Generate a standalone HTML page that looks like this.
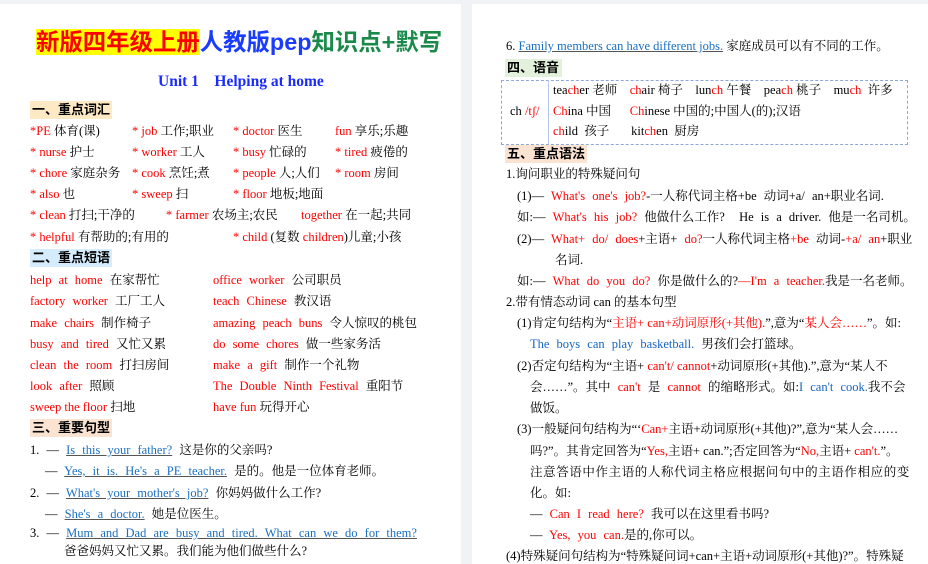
<!DOCTYPE html>
<html><head><meta charset="utf-8"><style>
body{margin:0;width:928px;height:557px;background:#f1f2f5;overflow:hidden;position:relative;font-family:"Liberation Serif","Noto Serif CJK SC",serif;font-size:12.5px;color:#000}
.pg{position:absolute;top:4px;background:#fff;height:560px}
.t{position:absolute;white-space:nowrap;line-height:16px}
.r{color:#f00}.b{color:#1565c0}.u{color:#1a6fc2;text-decoration:underline;text-decoration-color:#555}
.h{position:absolute;font-weight:bold;font-family:"Liberation Sans","Noto Sans CJK SC",sans-serif;font-size:13px;line-height:18px;padding-left:2px}
.ws{word-spacing:4px}
</style></head><body>
<div class="pg" style="left:0;width:461px"></div>
<div class="pg" style="left:472px;width:456px"></div>

<div class="t" style="left:36px;top:29px;font-family:'Liberation Sans','Noto Sans CJK SC',sans-serif;font-weight:bold;font-size:23.4px;line-height:27px"><span style="background:#ff0;color:#f00">新版四年级上册</span><span style="color:#1a3cff">人教版pep</span><span style="color:#1a8a4a">知识点+默写</span></div>
<div class="t" style="left:158px;top:73px;font-weight:bold;font-size:15.5px;color:#1a2bff;line-height:18px">Unit 1&nbsp;&nbsp;&nbsp;&nbsp;Helping at home</div>

<div class="h" style="left:30px;top:101px;width:80px;background:#fde9c4">一、重点词汇</div>
<div class="t r" style="left:30px;top:123px">*PE <span style="color:#000">体育(课)</span></div>
<div class="t r" style="left:132px;top:123px">* job <span style="color:#000">工作;职业</span></div>
<div class="t r" style="left:233px;top:123px">* doctor <span style="color:#000">医生</span></div>
<div class="t r" style="left:335px;top:123px">fun <span style="color:#000">享乐;乐趣</span></div>
<div class="t r" style="left:30px;top:144px">* nurse <span style="color:#000">护士</span></div>
<div class="t r" style="left:132px;top:144px">* worker <span style="color:#000">工人</span></div>
<div class="t r" style="left:233px;top:144px">* busy <span style="color:#000">忙碌的</span></div>
<div class="t r" style="left:335px;top:144px">* tired <span style="color:#000">疲倦的</span></div>
<div class="t r" style="left:30px;top:165px">* chore <span style="color:#000">家庭杂务</span></div>
<div class="t r" style="left:132px;top:165px">* cook <span style="color:#000">烹饪;煮</span></div>
<div class="t r" style="left:233px;top:165px">* people <span style="color:#000">人;人们</span></div>
<div class="t r" style="left:335px;top:165px">* room <span style="color:#000">房间</span></div>
<div class="t r" style="left:30px;top:186px">* also <span style="color:#000">也</span></div>
<div class="t r" style="left:132px;top:186px">* sweep <span style="color:#000">扫</span></div>
<div class="t r" style="left:233px;top:186px">* floor <span style="color:#000">地板;地面</span></div>
<div class="t r" style="left:30px;top:207px">* clean <span style="color:#000">打扫;干净的</span></div>
<div class="t r" style="left:166px;top:207px">* farmer <span style="color:#000">农场主;农民</span></div>
<div class="t r" style="left:301px;top:207px">together <span style="color:#000">在一起;共同</span></div>
<div class="t r" style="left:30px;top:229px">* helpful <span style="color:#000">有帮助的;有用的</span></div>
<div class="t r" style="left:233px;top:229px">* child <span style="color:#000">(复数 </span>children<span style="color:#000">)儿童;小孩</span></div>

<div class="h" style="left:30px;top:249px;width:80px;background:#d4ecfb">二、重点短语</div>
<div class="t r ws" style="left:30px;top:272px">help at home <span style="color:#000">在家帮忙</span></div>
<div class="t r ws" style="left:213px;top:272px">office worker <span style="color:#000">公司职员</span></div>
<div class="t r ws" style="left:30px;top:293px">factory worker <span style="color:#000">工厂工人</span></div>
<div class="t r ws" style="left:213px;top:293px">teach Chinese <span style="color:#000">教汉语</span></div>
<div class="t r ws" style="left:30px;top:315px">make chairs <span style="color:#000">制作椅子</span></div>
<div class="t r ws" style="left:213px;top:315px">amazing peach buns <span style="color:#000">令人惊叹的桃包</span></div>
<div class="t r ws" style="left:30px;top:336px">busy and tired <span style="color:#000">又忙又累</span></div>
<div class="t r ws" style="left:213px;top:336px">do some chores <span style="color:#000">做一些家务活</span></div>
<div class="t r ws" style="left:30px;top:357px">clean the room <span style="color:#000">打扫房间</span></div>
<div class="t r ws" style="left:213px;top:357px">make a gift <span style="color:#000">制作一个礼物</span></div>
<div class="t r ws" style="left:30px;top:378px">look after <span style="color:#000">照顾</span></div>
<div class="t r ws" style="left:213px;top:378px">The Double Ninth Festival <span style="color:#000">重阳节</span></div>
<div class="t r" style="left:30px;top:399px">sweep the floor <span style="color:#000">扫地</span></div>
<div class="t r" style="left:213px;top:399px">have fun <span style="color:#000">玩得开心</span></div>

<div class="h" style="left:30px;top:419px;width:80px;background:#fbe3d2">三、重要句型</div>
<div class="t ws" style="left:30px;top:442px">1. — <span class="u">Is this your father?</span> 这是你的父亲吗?</div>
<div class="t ws" style="left:45px;top:463px">— <span class="u">Yes, it is. He's a PE teacher.</span> 是的。他是一位体育老师。</div>
<div class="t ws" style="left:30px;top:485px">2. — <span class="u">What's your mother's job?</span> 你妈妈做什么工作?</div>
<div class="t ws" style="left:45px;top:506px">— <span class="u">She's a doctor.</span> 她是位医生。</div>
<div class="t ws" style="left:30px;top:525px">3. — <span class="u">Mum and Dad are busy and tired. What can we do for them?</span></div>
<div class="t" style="left:64px;top:543px">爸爸妈妈又忙又累。我们能为他们做些什么?</div>

<!-- right page -->
<div class="t" style="left:506px;top:38px">6. <span class="u">Family members can have different jobs.</span> 家庭成员可以有不同的工作。</div>
<div class="h" style="left:505px;top:59px;width:55px;background:#e3f1dc">四、语音</div>
<div style="position:absolute;left:501px;top:80px;width:405px;height:63px;border:1px dashed #8fa6dd"></div>
<div style="position:absolute;left:548px;top:80px;width:0;height:64px;border-left:1px solid #b8c6ea"></div>
<div class="t" style="left:510px;top:103px">ch <span class="r">/tʃ/</span></div>
<div class="t" style="left:553px;top:82px">tea<span class="r">ch</span>er 老师&nbsp;&nbsp;&nbsp;&nbsp;<span class="r">ch</span>air 椅子&nbsp;&nbsp;&nbsp;&nbsp;lun<span class="r">ch</span> 午餐&nbsp;&nbsp;&nbsp;&nbsp;pea<span class="r">ch</span> 桃子&nbsp;&nbsp;&nbsp;&nbsp;mu<span class="r">ch</span>&nbsp;&nbsp;许多</div>
<div class="t" style="left:553px;top:103px"><span class="r">Ch</span>ina 中国&nbsp;&nbsp;&nbsp;&nbsp;&nbsp;&nbsp;<span class="r">Ch</span>inese 中国的;中国人(的);汉语</div>
<div class="t" style="left:553px;top:123px"><span class="r">ch</span>ild&nbsp;&nbsp;孩子&nbsp;&nbsp;&nbsp;&nbsp;&nbsp;&nbsp;&nbsp;kit<span class="r">ch</span>en&nbsp;&nbsp;厨房</div>
<div class="h" style="left:505px;top:145px;width:80px;background:#fbe3d2">五、重点语法</div>
<div class="t" style="left:506px;top:166px">1.询问职业的特殊疑问句</div>
<div class="t ws" style="left:517px;top:188px">(1)— <span class="r">What's one's job?</span>-一人称代词主格+be 动词+a/ an+职业名词.</div>
<div class="t ws" style="left:517px;top:209px">如:— <span class="r">What's his job?</span> 他做什么工作?&nbsp; He is a driver. 他是一名司机。</div>
<div class="t ws" style="left:517px;top:231px">(2)— <span class="r">What+ do/ does</span>+主语+ <span class="r">do?</span>一人称代词主格<span class="r">+be</span> 动词-<span class="r">+a/ an</span>+职业</div>
<div class="t" style="left:555px;top:252px">名词.</div>
<div class="t ws" style="left:517px;top:273px">如:— <span class="r">What do you do?</span> 你是做什么的?<span class="r">—I'm a teacher.</span>我是一名老师。</div>
<div class="t" style="left:506px;top:294px">2.带有情态动词 can 的基本句型</div>
<div class="t" style="left:517px;top:315px">(1)肯定句结构为“<span class="r">主语+ can+动词原形(+其他).</span>”,意为“<span class="r">某人会……</span>”。如:</div>
<div class="t ws b" style="left:530px;top:336px">The boys can play basketball. <span style="color:#000">男孩们会打篮球。</span></div>
<div class="t" style="left:517px;top:358px">(2)否定句结构为“主语+ <span class="r">can't/ cannot</span>+动词原形(+其他).”,意为“某人不</div>
<div class="t ws" style="left:530px;top:379px">会……”。其中 <span class="r">can't</span> 是 <span class="r">cannot</span> 的缩略形式。如:<span class="b">I can't cook.</span>我不会</div>
<div class="t" style="left:530px;top:400px">做饭。</div>
<div class="t" style="left:517px;top:421px">(3)一般疑问句结构为“‘<span class="r">Can+</span>主语+动词原形(+其他)?”,意为“某人会……</div>
<div class="t" style="left:530px;top:443px">吗?”。其肯定回答为“<span class="r">Yes,</span>主语+ can.”;否定回答为“<span class="r">No,</span>主语+ <span class="r">can't.</span>”。</div>
<div class="t" style="left:530px;top:464px;letter-spacing:0.6px">注意答语中作主语的人称代词主格应根据问句中的主语作相应的变</div>
<div class="t" style="left:530px;top:485px">化。如:</div>
<div class="t ws" style="left:530px;top:506px">— <span class="r">Can I read here?</span> 我可以在这里看书吗?</div>
<div class="t ws" style="left:530px;top:527px">— <span class="r">Yes, you can.</span>是的,你可以。</div>
<div class="t" style="left:506px;top:548px">(4)特殊疑问句结构为“特殊疑问词+can+主语+动词原形(+其他)?”。特殊疑</div>
</body></html>
